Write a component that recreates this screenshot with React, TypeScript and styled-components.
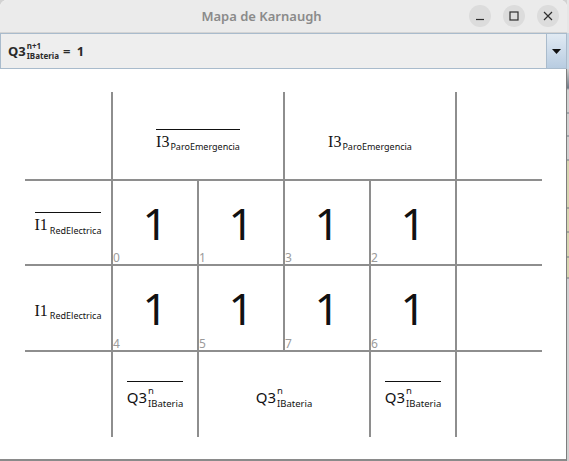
import * as React from "react";
import styled, { createGlobalStyle } from "styled-components";

const GlobalStyle = createGlobalStyle`
  html, body {
    margin: 0;
    padding: 0;
    background: #d2d2d2;
  }
  body {
    width: 569px;
    height: 461px;
    overflow: hidden;
    font-family: "Noto Sans", "DejaVu Sans", sans-serif;
  }
`;

const LINE = "#8e8e8e";

const Desktop = styled.div`
  display: flex;
  width: 569px;
  height: 461px;
`;

const Window = styled.div`
  width: 567px;
  display: flex;
  flex-direction: column;
  background: #ffffff;
  border-top-left-radius: 7px;
  border-top-right-radius: 7px;
  overflow: hidden;
`;

// sliver of the window behind, peeking out on the right
const NeighborStrip = styled.div`
  flex: 1;
  background: linear-gradient(
    to bottom,
    #e6e6e6 0px,
    #e6e6e6 33px,
    #c9d6e3 33px,
    #c9d6e3 69px,
    #d0d0d0 69px,
    #6f7a86 88px,
    #d0d0d0 90px,
    #d0d0d0 112px,
    #6f7a86 113px,
    #d0d0d0 114px,
    #d0d0d0 135px,
    #6f7a86 136px,
    #d0d0d0 137px,
    #d0d0d0 159px,
    #6f7a86 160px,
    #d6d4b0 161px,
    #d6d4b0 207px,
    #6f7a86 208px,
    #d6d4b0 209px,
    #d6d4b0 231px,
    #6f7a86 232px,
    #d6d4b0 233px,
    #d6d4b0 256px,
    #6f7a86 257px,
    #d6d4b0 258px,
    #d6d4b0 277px,
    #6f7a86 278px,
    #d0d0d0 279px,
    #d0d0d0 100%
  );
`;

const TitleBar = styled.div`
  height: 32px;
  display: flex;
  align-items: center;
  background: #ebebeb;
  border-bottom: 1px solid #d4d4d4;
  padding-right: 8px;
`;

const Title = styled.div`
  flex: 1;
  text-align: center;
  padding-left: 54px;
  font-size: 13px;
  font-weight: 600;
  color: #8a8a8a;
`;

const TitleButtons = styled.div`
  display: flex;
  gap: 12px;
`;

const TitleButton = styled.div`
  width: 22px;
  height: 22px;
  border-radius: 50%;
  background: #dcdcdc;
  display: flex;
  align-items: center;
  justify-content: center;
  color: #2e2e2e;
`;

const ComboBox = styled.div`
  height: 36px;
  box-sizing: border-box;
  display: flex;
  border: 1px solid #a9bbcc;
  background: #eeeeee;
`;

const ComboValue = styled.div`
  flex: 1;
  display: flex;
  align-items: center;
  padding-left: 7px;
  font-size: 13px;
  font-weight: 700;
  color: #2a2a2a;
`;

const ComboArrow = styled.div`
  width: 19px;
  border-left: 1px solid #a9bbcc;
  background: linear-gradient(to bottom, #e1eaf3, #b8cce1);
  display: flex;
  align-items: center;
  justify-content: center;
`;

const Content = styled.div`
  flex: 1;
  box-sizing: border-box;
  padding: 23px 0 0 25px;
  border-right: 1px solid #7d7d7d;
  border-bottom: 2px solid #8a8a8a;
`;

const KMap = styled.div`
  display: grid;
  grid-template-columns: repeat(5, 86px) 87px;
  grid-template-rows: 87px 85px 86px 87px;
`;

const Cell = styled.div<{ $left?: boolean; $top?: boolean; $span?: number; $pad?: number }>`
  position: relative;
  box-sizing: border-box;
  grid-column: span ${(p) => p.$span ?? 1};
  border-left: ${(p) => (p.$left ? `2px solid ${LINE}` : "none")};
  border-top: ${(p) => (p.$top ? `2px solid ${LINE}` : "none")};
  padding-top: ${(p) => p.$pad ?? 0}px;
  display: flex;
  align-items: center;
  justify-content: center;
`;

const One = styled.span`
  font-size: 44px;
  line-height: 1;
  color: #111111;
`;

const MintermIndex = styled.span`
  position: absolute;
  left: 0;
  bottom: 0;
  font-size: 12px;
  line-height: 1;
  color: #9b9b9b;
`;

const Term = styled.span<{ $bar?: boolean }>`
  display: inline-flex;
  align-items: center;
  white-space: nowrap;
  padding-top: 4px;
  border-top: 1px solid ${(p) => (p.$bar ? "#111" : "transparent")};
  color: #111111;
`;

const SerifName = styled.span`
  font-family: "Liberation Serif", serif;
  font-size: 16px;
  line-height: 1;
`;

const SansName = styled.span<{ $size?: number }>`
  font-size: ${(p) => p.$size ?? 15}px;
  line-height: 1;
`;

const LowSub = styled.span<{ $drop?: number; $gap?: number }>`
  font-size: 9px;
  line-height: 1;
  margin-left: ${(p) => p.$gap ?? 1}px;
  position: relative;
  top: ${(p) => p.$drop ?? 4}px;
`;

const ScriptStack = styled.span<{ $gap?: number; $size?: number }>`
  display: inline-flex;
  flex-direction: column;
  align-items: flex-start;
  gap: ${(p) => p.$gap ?? 3}px;
  margin-left: 1px;
  font-size: ${(p) => p.$size ?? 9.5}px;
  line-height: 1;
`;

const Equals = styled.span`
  margin-left: 4px;
  word-spacing: 3px;
`;

const Q3 = ({ bar }: { bar?: boolean }) => (
  <Term $bar={bar}>
    <SansName>Q3</SansName>
    <ScriptStack>
      <span>n</span>
      <span>IBateria</span>
    </ScriptStack>
  </Term>
);

const order = [
  [0, 1, 3, 2],
  [4, 5, 7, 6],
];

const rowTerms = [
  { bar: true },
  { bar: false },
];

const App = () => {
  return (
    <Desktop>
      <GlobalStyle />
      <Window>
        <TitleBar>
          <Title>Mapa de Karnaugh</Title>
          <TitleButtons>
            <TitleButton>
              <svg width="10" height="10" viewBox="0 0 10 10">
                <path d="M1 8.5h8" stroke="currentColor" strokeWidth="1.2" />
              </svg>
            </TitleButton>
            <TitleButton>
              <svg width="10" height="10" viewBox="0 0 10 10">
                <rect x="1" y="1" width="8" height="8" fill="none" stroke="currentColor" strokeWidth="1.2" />
              </svg>
            </TitleButton>
            <TitleButton>
              <svg width="10" height="10" viewBox="0 0 10 10">
                <path d="M1 1l8 8M9 1l-8 8" stroke="currentColor" strokeWidth="1.2" />
              </svg>
            </TitleButton>
          </TitleButtons>
        </TitleBar>

        <ComboBox>
          <ComboValue>
            <SansName $size={13}>Q3</SansName>
            <ScriptStack $gap={2} $size={8}>
              <span>n+1</span>
              <span>IBateria</span>
            </ScriptStack>
            <Equals>= 1</Equals>
          </ComboValue>
          <ComboArrow>
            <svg width="9" height="5" viewBox="0 0 9 5">
              <path d="M0 0h9L4.5 5z" fill="#111" />
            </svg>
          </ComboArrow>
        </ComboBox>

        <Content>
          <KMap>
            <Cell />
            <Cell $left $span={2} $pad={8}>
              <Term $bar>
                <SerifName>I3</SerifName>
                <LowSub>ParoEmergencia</LowSub>
              </Term>
            </Cell>
            <Cell $left $span={2} $pad={8}>
              <Term>
                <SerifName>I3</SerifName>
                <LowSub>ParoEmergencia</LowSub>
              </Term>
            </Cell>
            <Cell $left />

            {order.map((row, r) => (
              <React.Fragment key={r}>
                <Cell $top>
                  <Term $bar={rowTerms[r].bar}>
                    <SerifName>I1</SerifName>
                    <LowSub $gap={2} $drop={5}>RedElectrica</LowSub>
                  </Term>
                </Cell>
                {row.map((m) => (
                  <Cell key={m} $left $top>
                    <One>1</One>
                    <MintermIndex>{m}</MintermIndex>
                  </Cell>
                ))}
                <Cell $left $top />
              </React.Fragment>
            ))}

            <Cell $top />
            <Cell $left $top>
              <Q3 bar />
            </Cell>
            <Cell $left $top $span={2}>
              <Q3 />
            </Cell>
            <Cell $left $top>
              <Q3 bar />
            </Cell>
            <Cell $left $top />
          </KMap>
        </Content>
      </Window>
      <NeighborStrip />
    </Desktop>
  );
};

export default App;
